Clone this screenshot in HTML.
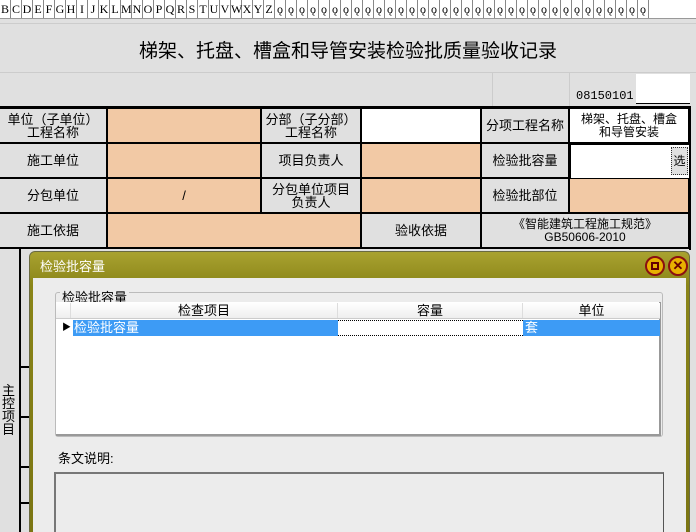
<!DOCTYPE html>
<html style="width:696px;height:532px;overflow:hidden"><head><meta charset="utf-8"><style>
*{margin:0;padding:0;box-sizing:border-box}
body{width:696px;height:532px;overflow:hidden;background:#e0e0e0;font-family:"Liberation Sans","WenQuanYi Zen Hei","Noto Sans CJK SC",sans-serif;font-size:13px;color:#000;position:relative}
.a{position:absolute}
.hdr{top:0;left:0;width:696px;height:19px;background:#fff;border-bottom:1px solid #999;display:flex;font-family:"Liberation Serif",serif;font-size:12px;overflow:hidden}
.hdr span{width:11px;border-right:1px solid #888;text-align:center;line-height:18px;flex:none}
.c{position:absolute;display:flex;align-items:center;justify-content:center;text-align:center;line-height:13px;border-right:2px solid #000;border-bottom:2px solid #000}
.p{background:#f2c9a5}.w{background:#fff}.g{background:#e0e0e0}
</style></head><body>
<div class="a hdr"><span>B</span><span>C</span><span>D</span><span>E</span><span>F</span><span>G</span><span>H</span><span>I</span><span>J</span><span>K</span><span>L</span><span>M</span><span>N</span><span>O</span><span>P</span><span>Q</span><span>R</span><span>S</span><span>T</span><span>U</span><span>V</span><span>W</span><span>X</span><span>Y</span><span>Z</span><span>ǫ</span><span>ǫ</span><span>ǫ</span><span>ǫ</span><span>ǫ</span><span>ǫ</span><span>ǫ</span><span>ǫ</span><span>ǫ</span><span>ǫ</span><span>ǫ</span><span>ǫ</span><span>ǫ</span><span>ǫ</span><span>ǫ</span><span>ǫ</span><span>ǫ</span><span>ǫ</span><span>ǫ</span><span>ǫ</span><span>ǫ</span><span>ǫ</span><span>ǫ</span><span>ǫ</span><span>ǫ</span><span>ǫ</span><span>ǫ</span><span>ǫ</span><span>ǫ</span><span>ǫ</span><span>ǫ</span><span>ǫ</span><span>ǫ</span><span>ǫ</span></div>
<div class="a" style="top:23px;left:0;width:696px;height:1px;background:#ccc"></div>
<div class="a" style="top:36px;left:0;width:696px;text-align:center;font-size:19px">梯架、托盘、槽盒和导管安装检验批质量验收记录</div>
<div class="a" style="top:72px;left:0;width:696px;height:1px;background:#ccc"></div>
<div class="a" style="top:73px;left:492px;width:1px;height:33px;background:#ccc"></div>
<div class="a" style="top:73px;left:569px;width:1px;height:33px;background:#ccc"></div>
<div class="a" style="top:89px;left:576px;font-size:12px;font-family:'Liberation Mono',monospace">08150101</div>
<div class="a w" style="top:74px;left:636px;width:54px;height:30px;border-bottom:1px solid #000"></div>
<div class="a" style="top:106px;left:0;width:691px;height:3px;background:#000"></div>
<div class="a" style="top:106px;left:689px;width:2px;height:144px;background:#000"></div>
<div class="c g" style="top:109px;left:0;width:108px;height:35px">单位（子单位）<br>工程名称</div>
<div class="c p" style="top:109px;left:108px;width:154px;height:35px"></div>
<div class="c g" style="top:109px;left:262px;width:100px;height:35px">分部（子分部）<br>工程名称</div>
<div class="c w" style="top:109px;left:362px;width:120px;height:35px"></div>
<div class="c g" style="top:109px;left:482px;width:88px;height:35px">分项工程名称</div>
<div class="c w" style="top:109px;left:570px;width:120px;height:35px;font-size:12px">梯架、托盘、槽盒<br>和导管安装</div>
<div class="c g" style="top:144px;left:0;width:108px;height:35px">施工单位</div>
<div class="c p" style="top:144px;left:108px;width:154px;height:35px"></div>
<div class="c g" style="top:144px;left:262px;width:100px;height:35px">项目负责人</div>
<div class="c p" style="top:144px;left:362px;width:120px;height:35px"></div>
<div class="c g" style="top:144px;left:482px;width:88px;height:35px">检验批容量</div>
<div class="c w" style="top:144px;left:570px;width:120px;height:35px;border:1px solid #000"></div>
<div class="a g" style="top:147px;left:671px;width:17px;height:28px;border:1px dotted #333;text-align:center;line-height:26px;font-size:12px">选</div>
<div class="c g" style="top:179px;left:0;width:108px;height:35px">分包单位</div>
<div class="c p" style="top:179px;left:108px;width:154px;height:35px">/</div>
<div class="c g" style="top:179px;left:262px;width:100px;height:35px">分包单位项目<br>负责人</div>
<div class="c p" style="top:179px;left:362px;width:120px;height:35px"></div>
<div class="c g" style="top:179px;left:482px;width:88px;height:35px">检验批部位</div>
<div class="c p" style="top:179px;left:570px;width:120px;height:35px"></div>
<div class="c g" style="top:214px;left:0;width:108px;height:35px">施工依据</div>
<div class="c p" style="top:214px;left:108px;width:254px;height:35px"></div>
<div class="c g" style="top:214px;left:362px;width:120px;height:35px">验收依据</div>
<div class="c g" style="top:214px;left:482px;width:208px;height:35px;font-size:12px">《智能建筑工程施工规范》<br>GB50606-2010</div>
<div class="a" style="top:249px;left:19px;width:2px;height:283px;background:#000"></div>
<div class="a" style="top:384px;left:2px;width:14px;font-size:13px;line-height:13px">主控项目</div>
<div class="a" style="top:366px;left:20px;width:10px;height:2px;background:#000"></div>
<div class="a" style="top:416px;left:20px;width:10px;height:2px;background:#000"></div>
<div class="a" style="top:466px;left:20px;width:10px;height:2px;background:#000"></div>
<div class="a" style="top:502px;left:20px;width:10px;height:2px;background:#000"></div>
<div class="a" style="top:251px;left:29px;width:661px;height:281px;border-radius:6px 6px 0 0;background:linear-gradient(#a9a230,#8a8518 12%,#7b7512);border:1px solid #6a6a40;border-bottom:none"></div>
<div class="a" style="top:256px;left:40px;color:#fff;font-size:13px">检验批容量</div>
<div class="a" style="top:256px;left:645px;width:20px;height:20px;border-radius:50%;background:#e8b000;border:2px solid #8a1010"></div>
<div class="a" style="top:262px;left:651px;width:8px;height:8px;border:2px solid #600"></div>
<div class="a" style="top:256px;left:668px;width:20px;height:20px;border-radius:50%;background:#e8b000;border:2px solid #8a1010;color:#600;font-weight:bold;font-size:13px;line-height:16px;text-align:center">✕</div>
<div class="a" style="top:278px;left:33px;width:653px;height:254px;background:#ececec"></div>
<div class="a" style="top:292px;left:55px;width:608px;height:145px;border:1px solid #bbb;border-radius:3px"></div>
<div class="a" style="top:287px;left:60px;background:#ececec;padding:0 2px">检验批容量</div>
<div class="a w" style="top:302px;left:56px;width:605px;height:134px;border-right:2px solid #999;border-bottom:2px solid #999"></div>
<div class="a" style="top:303px;left:56px;width:604px;height:16px;background:linear-gradient(#fff,#eee);border-bottom:1px solid #ccc;display:flex;line-height:15px">
<div style="width:15px;border-right:1px solid #ddd"></div>
<div style="width:267px;text-align:center;border-right:1px solid #ddd">检查项目</div>
<div style="width:185px;text-align:center;border-right:1px solid #ddd">容量</div>
<div style="width:137px;text-align:center">单位</div></div>
<div class="a" style="top:320px;left:62px;font-size:9px">▶</div>
<div class="a" style="top:320px;left:73px;width:265px;height:16px;background:#3d9bf5;color:#fff;line-height:15px;padding-left:1px">检验批容量</div>
<div class="a" style="top:320px;left:338px;width:185px;height:16px;border-top:1px dotted #000;border-bottom:1px dotted #000"></div>
<div class="a" style="top:320px;left:523px;width:137px;height:16px;background:#3d9bf5;color:#fff;line-height:15px;padding-left:2px">套</div>
<div class="a" style="top:448px;left:58px">条文说明:</div>
<div class="a" style="top:472px;left:54px;width:610px;height:60px;border:2px solid #777;border-right:1px solid #555;border-bottom:none"></div>
</body></html>
